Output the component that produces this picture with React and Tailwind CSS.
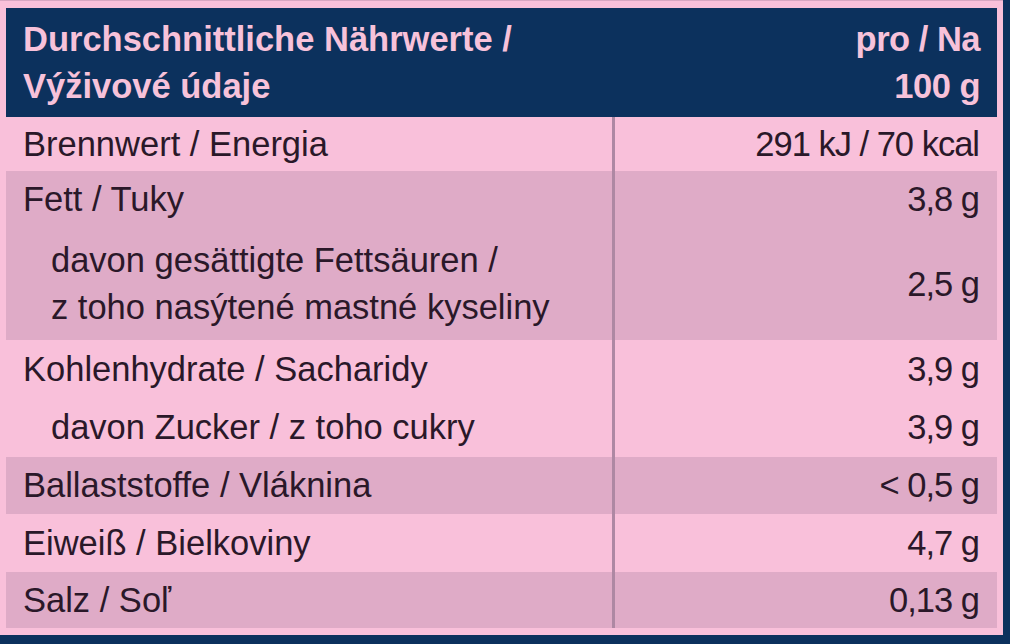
export default function App() {
  const rows = [
    { l: ["Brennwert / Energia"], r: "291 kJ / 70 kcal", h: "h-[54px]", dark: false },
    { l: ["Fett / Tuky"], r: "3,8 g", h: "h-[57px]", dark: true },
    { l: ["davon gesättigte Fettsäuren /", "z toho nasýtené mastné kyseliny"], r: "2,5 g", h: "h-[112px]", dark: true, indent: true },
    { l: ["Kohlenhydrate / Sacharidy"], r: "3,9 g", h: "h-[58px]", dark: false },
    { l: ["davon Zucker / z toho cukry"], r: "3,9 g", h: "h-[59px]", dark: false, indent: true },
    { l: ["Ballaststoffe / Vláknina"], r: "< 0,5 g", h: "h-[57px]", dark: true },
    { l: ["Eiweiß / Bielkoviny"], r: "4,7 g", h: "h-[58px]", dark: false },
    { l: ["Salz / Soľ"], r: "0,13 g", h: "h-[56px]", dark: true },
  ];
  return (
    <div
      className="w-[1010px] h-[644px] bg-[#0c315d] overflow-hidden"
      style={{ fontFamily: '"Liberation Sans", Arial, sans-serif' }}
    >
      <div className="w-[1003px] h-[635px] bg-[#f9c0da] border-t border-[#d8a6c1] pt-[7px] pl-[6px]">
        <div className="w-[991px]">
          <div className="h-[109px] bg-[#0c315d] flex items-center justify-between pl-[17px] pr-[17px] text-[34.5px] font-bold leading-[47px] text-[#f7c2da]">
            <div>
              <div>Durchschnittliche Nährwerte /</div>
              <div>Výživové údaje</div>
            </div>
            <div className="text-right tracking-[-0.5px]">
              <div>pro / Na</div>
              <div>100 g</div>
            </div>
          </div>
          {rows.map((row, i) => (
            <div
              key={i}
              className={`flex ${row.h} ${row.dark ? "bg-[#dfabc7]" : "bg-[#f9c0da]"} text-[34.5px] leading-[47px] text-[#2a1829]`}
            >
              <div
                className={`w-[609px] shrink-0 flex flex-col justify-center border-r-[3px] border-[#ae88a3] ${row.indent ? "pl-[45px]" : "pl-[17px]"}`}
              >
                {row.l.map((t, j) => (
                  <div key={j} className="whitespace-nowrap">{t}</div>
                ))}
              </div>
              <div className="flex-1 flex items-center justify-end pr-[18px] whitespace-nowrap tracking-[-1px]">
                {row.r}
              </div>
            </div>
          ))}
        </div>
      </div>
    </div>
  );
}
